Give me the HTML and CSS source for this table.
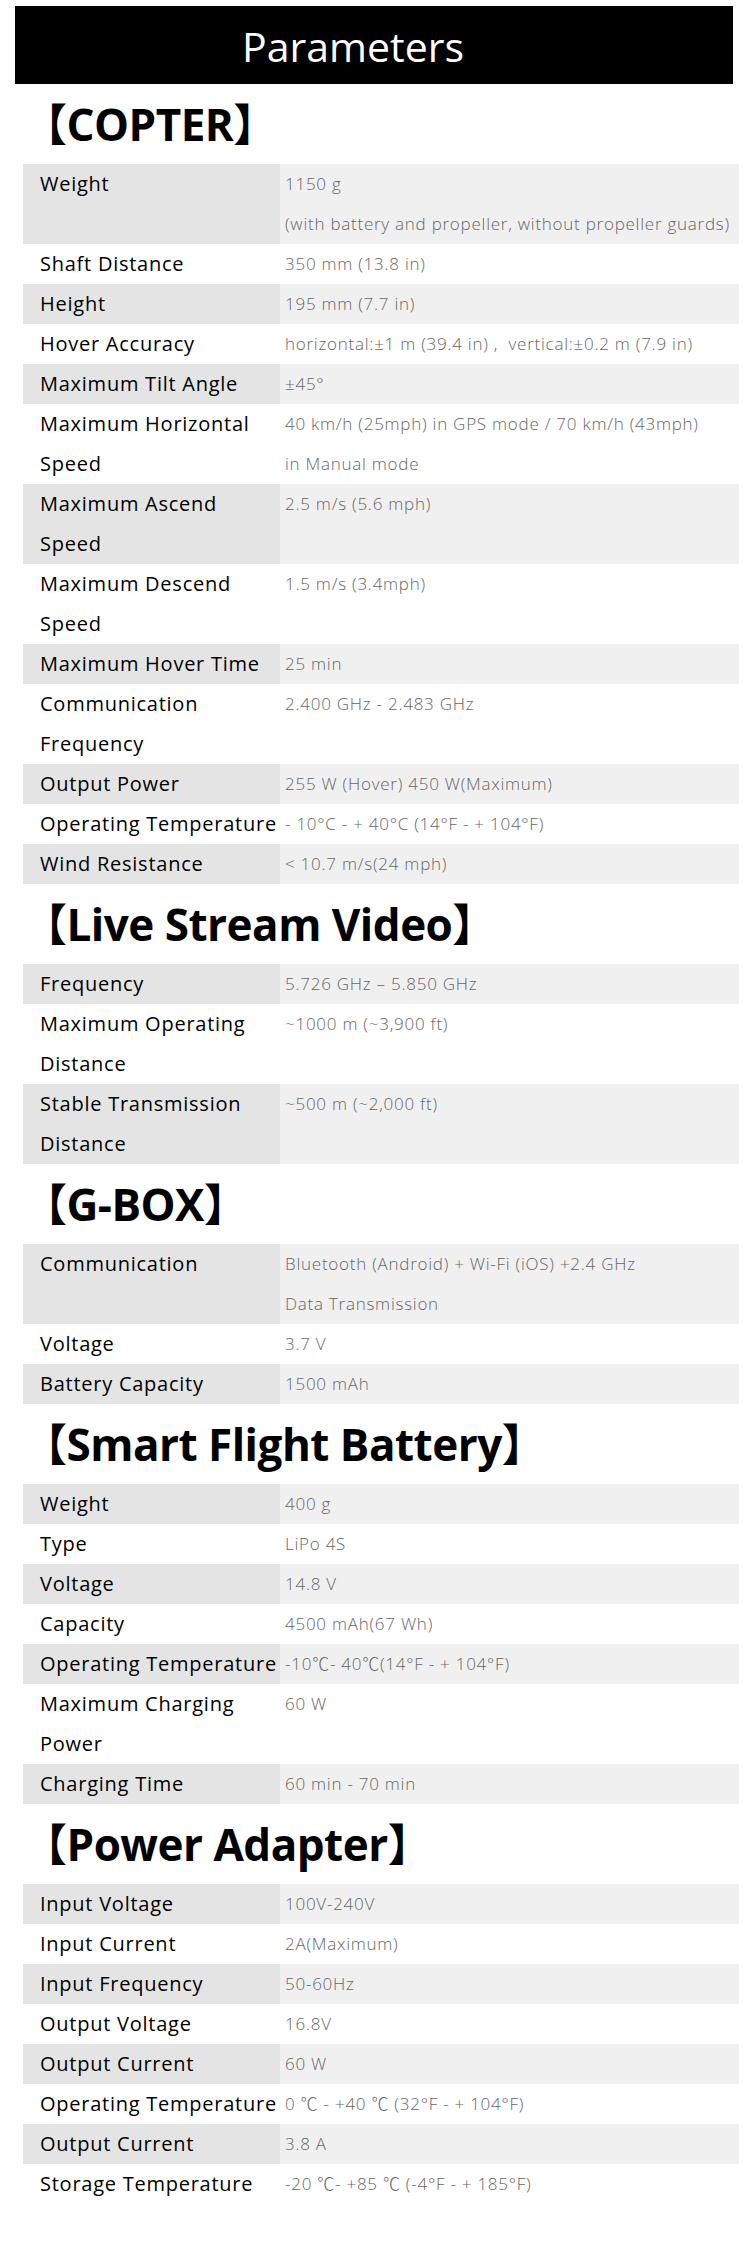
FILE: index.html
```html
<!DOCTYPE html>
<html lang="en">
<head>
    <meta charset="UTF-8">
    <meta name="viewport" content="width=device-width, initial-scale=1.0">
    <title>Parameters</title>
    <link rel="stylesheet" href="styles.css">
</head>
<body>
    <h1 class="banner">Parameters</h1>

    <h2 class="section-title">【COPTER】</h2>
    <div class="specs">
        <div class="row"><div class="key">Weight</div><div class="val">1150 g<br>(with battery and propeller, without propeller guards)</div></div>
        <div class="row"><div class="key">Shaft Distance</div><div class="val">350 mm (13.8 in)</div></div>
        <div class="row"><div class="key">Height</div><div class="val">195 mm (7.7 in)</div></div>
        <div class="row"><div class="key">Hover Accuracy</div><div class="val">horizontal:±1 m (39.4 in) ,&nbsp; vertical:±0.2 m (7.9 in)</div></div>
        <div class="row"><div class="key">Maximum Tilt Angle</div><div class="val">±45°</div></div>
        <div class="row"><div class="key">Maximum Horizontal<br>Speed</div><div class="val">40 km/h (25mph) in GPS mode / 70 km/h (43mph)<br>in Manual mode</div></div>
        <div class="row"><div class="key">Maximum Ascend<br>Speed</div><div class="val">2.5 m/s (5.6 mph)</div></div>
        <div class="row"><div class="key">Maximum Descend<br>Speed</div><div class="val">1.5 m/s (3.4mph)</div></div>
        <div class="row"><div class="key">Maximum Hover Time</div><div class="val">25 min</div></div>
        <div class="row"><div class="key">Communication<br>Frequency</div><div class="val">2.400 GHz - 2.483 GHz</div></div>
        <div class="row"><div class="key">Output Power</div><div class="val">255 W (Hover) 450 W(Maximum)</div></div>
        <div class="row"><div class="key">Operating Temperature</div><div class="val">- 10°C - + 40°C (14°F - + 104°F)</div></div>
        <div class="row"><div class="key">Wind Resistance</div><div class="val">&lt; 10.7 m/s(24 mph)</div></div>
    </div>

    <h2 class="section-title">【Live Stream Video】</h2>
    <div class="specs">
        <div class="row"><div class="key">Frequency</div><div class="val">5.726 GHz – 5.850 GHz</div></div>
        <div class="row"><div class="key">Maximum Operating<br>Distance</div><div class="val">~1000 m (~3,900 ft)</div></div>
        <div class="row"><div class="key">Stable Transmission<br>Distance</div><div class="val">~500 m (~2,000 ft)</div></div>
    </div>

    <h2 class="section-title">【G-BOX】</h2>
    <div class="specs">
        <div class="row"><div class="key">Communication</div><div class="val">Bluetooth (Android) + Wi-Fi (iOS) +2.4 GHz<br>Data Transmission</div></div>
        <div class="row"><div class="key">Voltage</div><div class="val">3.7 V</div></div>
        <div class="row"><div class="key">Battery Capacity</div><div class="val">1500 mAh</div></div>
    </div>

    <h2 class="section-title">【Smart Flight Battery】</h2>
    <div class="specs">
        <div class="row"><div class="key">Weight</div><div class="val">400 g</div></div>
        <div class="row"><div class="key">Type</div><div class="val">LiPo 4S</div></div>
        <div class="row"><div class="key">Voltage</div><div class="val">14.8 V</div></div>
        <div class="row"><div class="key">Capacity</div><div class="val">4500 mAh(67 Wh)</div></div>
        <div class="row"><div class="key">Operating Temperature</div><div class="val">-10℃- 40℃(14°F - + 104°F)</div></div>
        <div class="row"><div class="key">Maximum Charging<br>Power</div><div class="val">60 W</div></div>
        <div class="row"><div class="key">Charging Time</div><div class="val">60 min - 70 min</div></div>
    </div>

    <h2 class="section-title">【Power Adapter】</h2>
    <div class="specs">
        <div class="row"><div class="key">Input Voltage</div><div class="val">100V-240V</div></div>
        <div class="row"><div class="key">Input Current</div><div class="val">2A(Maximum)</div></div>
        <div class="row"><div class="key">Input Frequency</div><div class="val">50-60Hz</div></div>
        <div class="row"><div class="key">Output Voltage</div><div class="val">16.8V</div></div>
        <div class="row"><div class="key">Output Current</div><div class="val">60 W</div></div>
        <div class="row"><div class="key">Operating Temperature</div><div class="val">0 ℃ - +40 ℃ (32°F - + 104°F)</div></div>
        <div class="row"><div class="key">Output Current</div><div class="val">3.8 A</div></div>
        <div class="row"><div class="key">Storage Temperature</div><div class="val">-20 ℃- +85 ℃ (-4°F - + 185°F)</div></div>
    </div>
</body>
</html>
```

FILE: styles.css
```css
body {
    margin: 0;
    padding: 6px 11px 60px 15px;
    font-family: "Open Sans", "Noto Sans CJK SC", sans-serif;
    background: #fff;
    color: #000;
}
.banner {
    margin: 0 6px 0 0;
    padding-right: 42px;
    height: 78px;
    background: #000;
    color: #fff;
    font-size: 41px;
    font-weight: 400;
    line-height: 80px;
    text-align: center;
}
.section-title {
    margin: 0 0 0 8px;
    height: 80px;
    font-size: 44px;
    font-weight: 700;
    line-height: 80px;
    letter-spacing: -0.5px;
}
.specs {
    margin-left: 8px;
    width: 716px;
}
.row {
    display: grid;
    grid-template-columns: 257px 1fr;
    line-height: 40px;
}
.key {
    padding-left: 17px;
    font-size: 20px;
    letter-spacing: 0.75px;
    color: #000;
    white-space: nowrap;
}
.val {
    padding-left: 5px;
    font-size: 17px;
    font-weight: 300;
    letter-spacing: 0.75px;
    color: #666;
    white-space: nowrap;
}
.row:nth-child(odd) .key {
    background: #e4e4e4;
}
.row:nth-child(odd) .val {
    background: #f0f0f0;
}
```
